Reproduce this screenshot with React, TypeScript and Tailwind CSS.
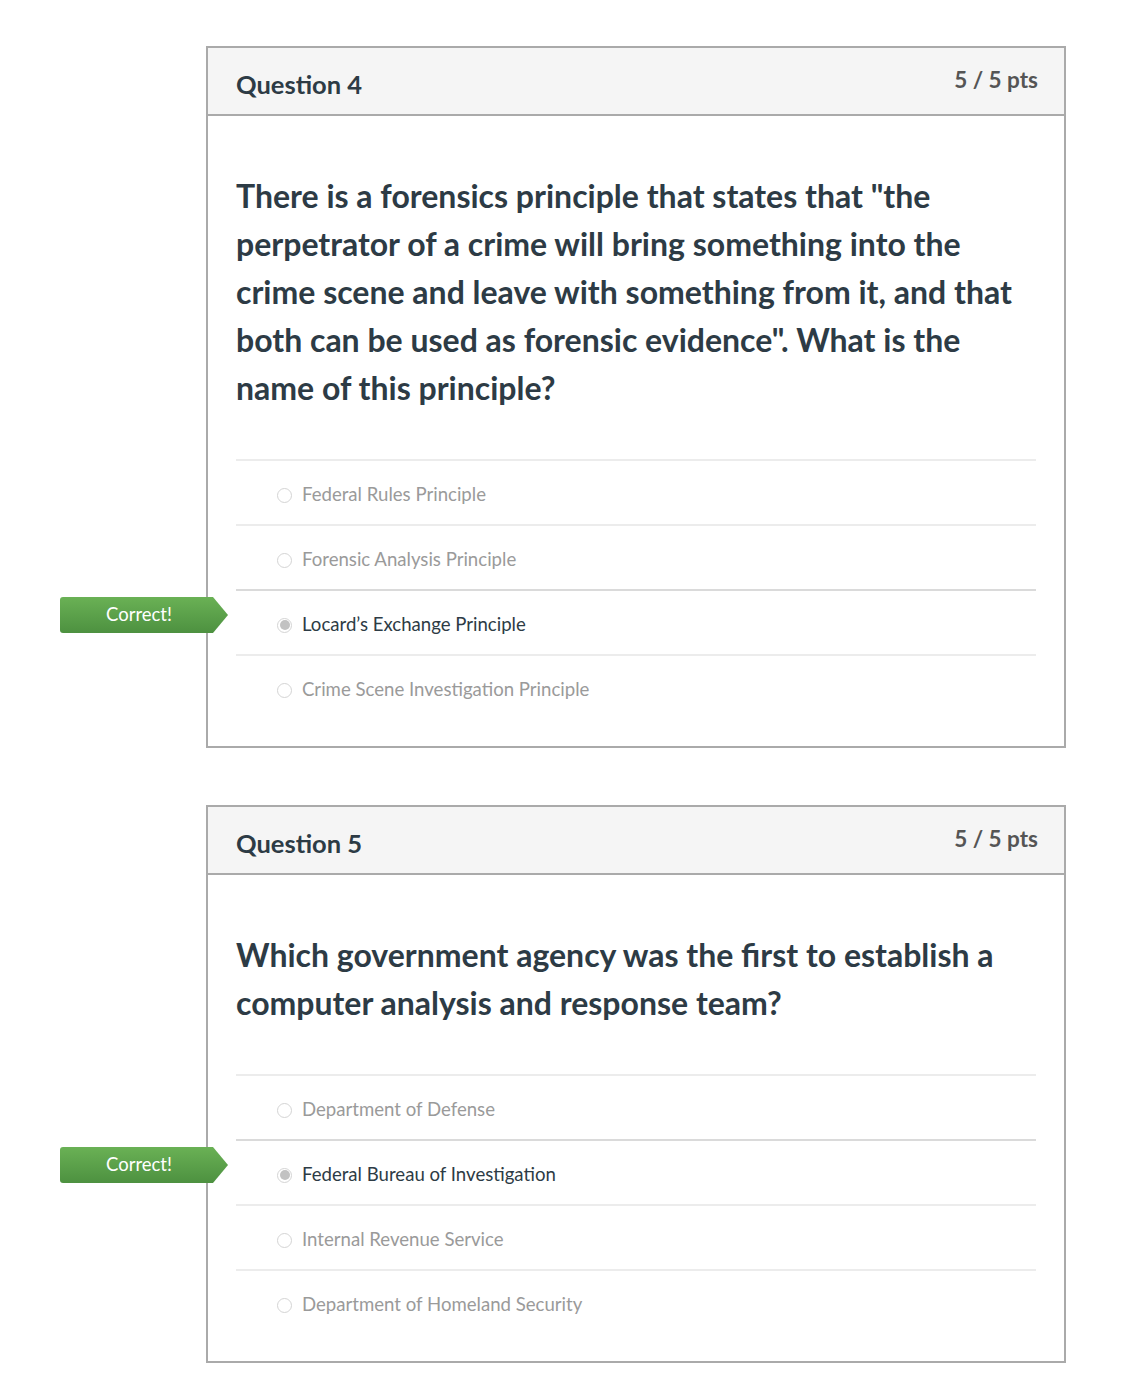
import React from 'react';

type Answer = { text: string; selected?: boolean };

const questions: { title: string; pts: string; text: string; answers: Answer[] }[] = [
  {
    title: 'Question 4',
    pts: '5 / 5 pts',
    text: 'There is a forensics principle that states that "the perpetrator of a crime will bring something into the crime scene and leave with something from it, and that both can be used as forensic evidence". What is the name of this principle?',
    answers: [
      { text: 'Federal Rules Principle' },
      { text: 'Forensic Analysis Principle' },
      { text: 'Locard\u2019s Exchange Principle', selected: true },
      { text: 'Crime Scene Investigation Principle' },
    ],
  },
  {
    title: 'Question 5',
    pts: '5 / 5 pts',
    text: 'Which government agency was the first to establish a computer analysis and response team?',
    answers: [
      { text: 'Department of Defense' },
      { text: 'Federal Bureau of Investigation', selected: true },
      { text: 'Internal Revenue Service' },
      { text: 'Department of Homeland Security' },
    ],
  },
];

function Radio({ checked }: { checked?: boolean }) {
  return (
    <span className="flex h-[15px] w-[15px] shrink-0 items-center justify-center rounded-full border border-[#d4d4d4] bg-white">
      {checked && <span className="h-[10px] w-[10px] rounded-full bg-[#c2c2c2]" />}
    </span>
  );
}

function CorrectBadge() {
  return (
    <div
      className="absolute left-[-176px] top-[6px] flex h-[36px] w-[168px] items-center rounded-l-[3px] bg-gradient-to-b from-[#6ab155] to-[#4d9140] pl-[5px] text-[18.5px] text-white"
      style={{ clipPath: 'polygon(0 0, 153px 0, 168px 50%, 153px 100%, 0 100%)' }}
    >
      <span className="w-[148px] text-center">Correct!</span>
    </div>
  );
}

export default function App() {
  return (
    <div className="min-h-screen bg-white pt-[46px] pb-[30px] font-['Lato','Liberation_Sans',sans-serif]">
      <div className="ml-[206px] flex w-[860px] flex-col gap-[57px]">
        {questions.map((q) => (
          <div key={q.title} className="border-2 border-[#aaaaaa] bg-white">
            {/* header */}
            <div className="flex h-[68px] items-start justify-between border-b-2 border-[#aaaaaa] bg-[#f5f5f5] px-[26px]">
              <h2 className="pl-[2px] pt-[20px] text-[25.5px] leading-[32px] font-bold text-[#2d3b45]">{q.title}</h2>
              <span className="pt-[18px] text-[22.5px] leading-[28px] font-bold text-[#555555]">{q.pts}</span>
            </div>

            {/* body */}
            <div className="px-[28px] pt-[56px] pb-[27px]">
              <p className="pr-[20px] text-[32px] leading-[48px] font-bold text-[#2d3b45]">{q.text}</p>
              <div className="mt-[47px]">
                {q.answers.map((a) => (
                  <div
                    key={a.text}
                    className={
                      'relative flex h-[65px] items-center gap-[10px] border-t-2 pt-[5px] pl-[41px] text-[18.6px] ' +
                      (a.selected ? 'border-[#dadada] text-[#2d3b45]' : 'border-[#ececec] text-[#9a9a9a]')
                    }
                  >
                    {a.selected && <CorrectBadge />}
                    <Radio checked={a.selected} />
                    <span>{a.text}</span>
                  </div>
                ))}
              </div>
            </div>
          </div>
        ))}
      </div>
    </div>
  );
}
